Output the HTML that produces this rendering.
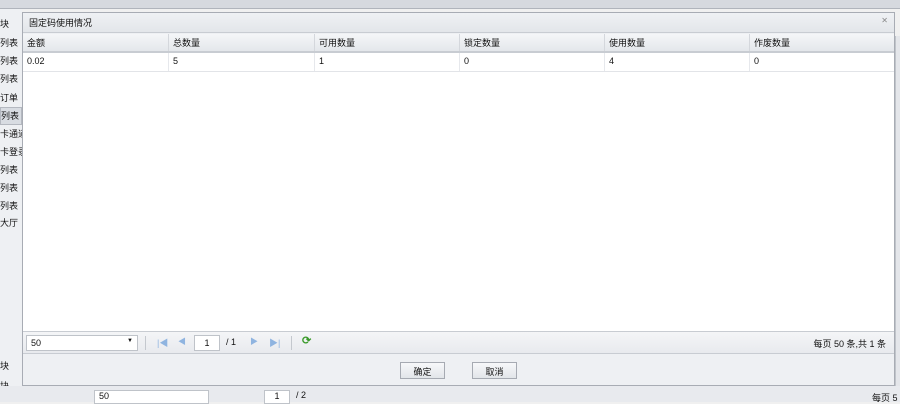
<!DOCTYPE html>
<html><head><meta charset="utf-8"><style>
*{margin:0;padding:0;box-sizing:border-box}
body{width:900px;height:402px;overflow:hidden;background:#f0f0f0;font-family:"Liberation Sans","Noto Sans CJK SC",sans-serif;font-size:9px;color:#111;position:relative}
.abs{position:absolute}
.top{left:0;top:0;width:900px;height:9px;background:#d6d9df;border-bottom:1px solid #b0b4bc}
.side{left:0;top:9px;width:22px;height:393px;background:#eef0f3}
.si{position:absolute;left:0;font-size:9px;white-space:nowrap}
.dlg{left:22px;top:12px;width:873px;height:374px;background:#eef0f3;border:1px solid #a8acb4}
.title{left:0;top:0;width:871px;height:20px;background:linear-gradient(#eff1f4,#e3e6ea);border-bottom:1px solid #c8ccd2;padding:3px 6px;font-size:9px}
.grid{left:0;top:21px;width:871px;height:297px;background:#fff}
.hd{left:0;top:0;width:871px;height:19px;background:linear-gradient(#f5f6f8,#e4e7eb);border-bottom:2px solid #c8ccd2}
.c{position:absolute;top:0;height:17px;padding:2px 4px;border-left:1px solid #d4d7dc}
.row{left:0;top:19px;width:871px;height:19px;border-bottom:1px solid #e2e4e8}
.r{position:absolute;top:0;height:18px;padding:3px 4px;border-left:1px solid #e6e8ec}
.pager{left:0;top:318px;width:871px;height:23px;background:linear-gradient(#f4f5f7,#e8eaee);border-top:1px solid #c8ccd2;border-bottom:1px solid #c8ccd2}
.sel{position:absolute;background:#fff;border:1px solid #bfc3c9;height:16px;padding:2px 4px}
.btn{position:absolute;width:45px;height:17px;border:1px solid #a6aab2;background:linear-gradient(#f7f8fa,#e2e5e9);text-align:center;padding-top:2px}
</style></head><body>
<div class="abs top"></div>
<div class="abs side">
<span class="si" style="top:8px">块</span>
<span class="si" style="top:27px">列表</span>
<span class="si" style="top:45px">列表</span>
<span class="si" style="top:63px">列表</span>
<span class="si" style="top:82px">订单</span>
<span class="si" style="top:98px;background:#d8dce2;border:1px solid #b4b8c0;width:22px;height:18px;padding-top:1px">列表</span>
<span class="si" style="top:118px">卡通道</span>
<span class="si" style="top:136px">卡登录</span>
<span class="si" style="top:154px">列表</span>
<span class="si" style="top:172px">列表</span>
<span class="si" style="top:190px">列表</span>
<span class="si" style="top:207px">大厅</span>
<span class="si" style="top:350px">块</span>
<span class="si" style="top:370px">块</span>
</div>
<div class="abs" style="left:895px;top:36px;width:5px;height:350px;background:#e4e6ea;border-left:1px solid #c0c4ca"></div>
<div class="abs" style="left:0;top:386px;width:900px;height:16px;background:#e8eaee"></div>
<div class="abs sel" style="left:94px;top:390px;width:115px;height:14px;padding:0 4px">50</div>
<div class="abs" style="left:264px;top:390px;width:26px;height:14px;background:#fff;border:1px solid #bfc3c9;text-align:center">1</div>
<div class="abs" style="left:296px;top:390px">/ 2</div>
<div class="abs" style="left:872px;top:391px">每页 5</div>
<div class="abs dlg">
<div class="abs title">固定码使用情况<span style="position:absolute;right:6px;top:3px;color:#888;font-size:8px">✕</span></div>
<div class="abs grid">
<div class="abs hd">
<div class="c" style="left:0;border:0">金额</div>
<div class="c" style="left:145px">总数量</div>
<div class="c" style="left:291px">可用数量</div>
<div class="c" style="left:436px">锁定数量</div>
<div class="c" style="left:581px">使用数量</div>
<div class="c" style="left:726px">作废数量</div>
</div>
<div class="abs row">
<div class="r" style="left:0;border:0">0.02</div>
<div class="r" style="left:145px">5</div>
<div class="r" style="left:291px">1</div>
<div class="r" style="left:436px">0</div>
<div class="r" style="left:581px">4</div>
<div class="r" style="left:726px">0</div>
</div>
</div>
<div class="abs pager">
<div class="sel" style="left:3px;top:3px;width:112px">50<span style="position:absolute;right:4px;top:2px;font-size:6px">▼</span></div>
<span style="position:absolute;left:122px;top:4px;width:1px;height:14px;background:#c4c8ce"></span>
<span style="position:absolute;left:134px;top:4px;color:#8fb4e0;font-size:9px">|◀</span>
<span style="position:absolute;left:155px;top:4px;color:#8fb4e0;font-size:8px">◀</span>
<div class="sel" style="left:171px;top:3px;width:26px;text-align:center;padding:2px 0">1</div>
<span style="position:absolute;left:203px;top:5px">/ 1</span>
<span style="position:absolute;left:227px;top:4px;color:#8fb4e0;font-size:8px">▶</span>
<span style="position:absolute;left:246px;top:4px;color:#8fb4e0;font-size:9px">▶|</span>
<span style="position:absolute;left:268px;top:4px;width:1px;height:14px;background:#c4c8ce"></span>
<span style="position:absolute;left:279px;top:2px;color:#3a9a2a;font-size:11px;font-weight:bold">⟳</span>
<span style="position:absolute;right:8px;top:5px">每页 50 条,共 1 条</span>
</div>
<div class="btn" style="left:377px;top:349px">确定</div>
<div class="btn" style="left:449px;top:349px">取消</div>
</div>
</body></html>
